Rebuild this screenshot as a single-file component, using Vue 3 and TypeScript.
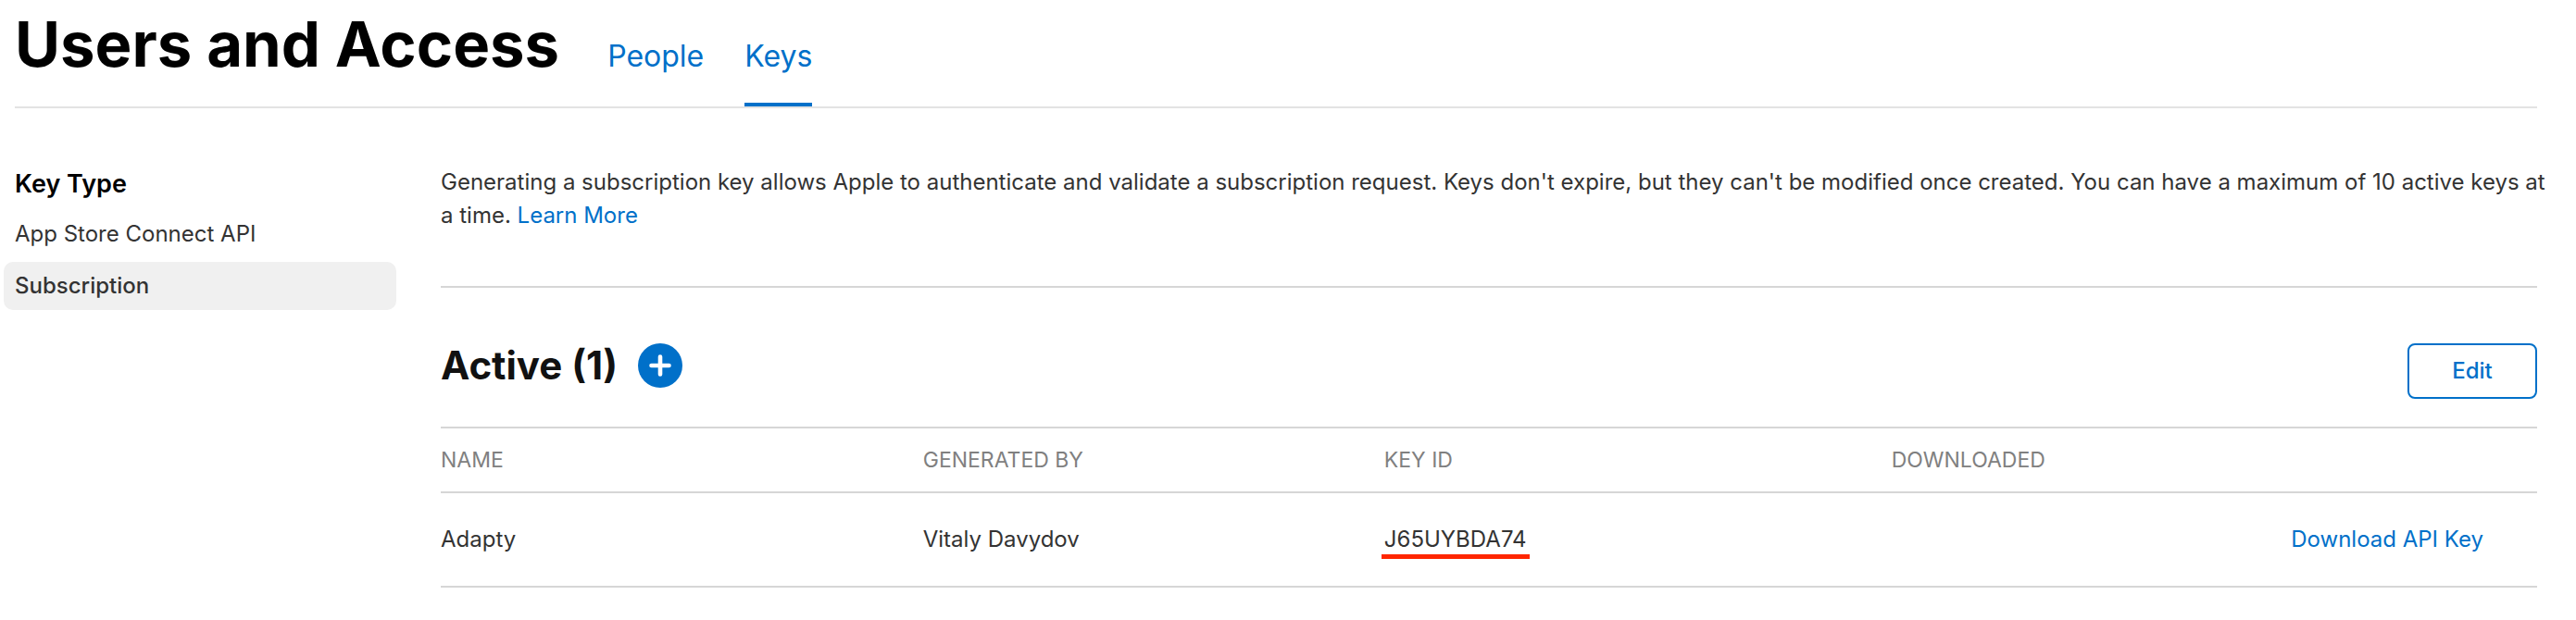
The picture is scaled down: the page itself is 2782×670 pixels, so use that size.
<script setup lang="ts">
import { ref } from 'vue'

interface ApiKey {
  name: string
  generatedBy: string
  keyId: string
  downloaded: string
}

const tabs = ['People', 'Keys']
const activeTab = ref('Keys')

const keyTypes = ['App Store Connect API', 'Subscription']
const activeType = ref('Subscription')

const keys = ref<ApiKey[]>([
  { name: 'Adapty', generatedBy: 'Vitaly Davydov', keyId: 'J65UYBDA74', downloaded: '' },
])
</script>

<template>
  <div class="page">
    <header class="header">
      <h1 class="title">Users and Access</h1>
      <nav class="tabs" aria-label="Sections">
        <a
          v-for="tab in tabs"
          :key="tab"
          href="#"
          class="tab"
          :class="{ current: tab === activeTab }"
          @click.prevent="activeTab = tab"
        >{{ tab }}</a>
      </nav>
    </header>

    <div class="body">
      <aside class="sidebar">
        <h2 class="side-title">Key Type</h2>
        <nav class="side-nav" aria-label="Key Type">
          <a
            v-for="type in keyTypes"
            :key="type"
            href="#"
            class="side-link"
            :class="{ current: type === activeType }"
            @click.prevent="activeType = type"
          >{{ type }}</a>
        </nav>
      </aside>

      <main class="main">
        <div class="intro">
          <p>
            Generating a subscription key allows Apple to authenticate and validate a subscription
            request. Keys don't expire, but they can't be modified once created. You can have a
            maximum of 10 active keys at a time. <a href="#" class="link">Learn More</a>
          </p>
        </div>

        <section>
          <div class="toolbar">
            <h2 class="count">Active ({{ keys.length }})</h2>
            <button type="button" class="add" aria-label="Generate key">
              <svg viewBox="0 0 48 48" width="48" height="48" aria-hidden="true">
                <circle cx="24" cy="24" r="24" fill="#0070c9" />
                <path d="M24 14.5v19M14.5 24h19" stroke="#fff" stroke-width="4.6" stroke-linecap="round" />
              </svg>
            </button>
            <button type="button" class="edit">Edit</button>
          </div>

          <table class="keys">
            <colgroup>
              <col class="c-name" />
              <col class="c-by" />
              <col class="c-id" />
              <col class="c-down" />
              <col />
            </colgroup>
            <thead>
              <tr>
                <th scope="col">NAME</th>
                <th scope="col">GENERATED BY</th>
                <th scope="col">KEY ID</th>
                <th scope="col">DOWNLOADED</th>
                <td></td>
              </tr>
            </thead>
            <tbody>
              <tr v-for="key in keys" :key="key.keyId">
                <td>{{ key.name }}</td>
                <td>{{ key.generatedBy }}</td>
                <td><span class="key-id">{{ key.keyId }}</span></td>
                <td>{{ key.downloaded }}</td>
                <td class="action"><a href="#" class="link">Download API Key</a></td>
              </tr>
            </tbody>
          </table>
        </section>
      </main>
    </div>
  </div>
</template>

<style>
body {
  margin: 0;
  background: #fff;
}
</style>

<style scoped>
.page {
  padding: 0 42px 36px 16px;
  font-family: Inter, "Liberation Sans", sans-serif;
  font-size: 24px;
  line-height: 36px;
  color: #333;
}

h1,
h2,
p {
  margin: 0;
}

a {
  text-decoration: none;
}

.link {
  color: #0070c9;
}

.header {
  display: flex;
  align-items: baseline;
  gap: 52px;
  border-bottom: 2px solid #e3e3e3;
}

.title {
  font-size: 67px;
  line-height: 96px;
  font-weight: 700;
  color: #000;
}

.tabs {
  display: flex;
  gap: 44px;
}

.tab {
  padding-bottom: 28px;
  border-bottom: 4px solid transparent;
  font-size: 32px;
  line-height: 44px;
  color: #0070c9;
}

.tab.current {
  border-bottom-color: #0070c9;
}

.body {
  display: flex;
  gap: 48px;
}

.sidebar {
  flex: 0 0 424px;
  margin-left: -12px;
  padding-top: 64px;
}

.side-title {
  padding-left: 12px;
  font-size: 27px;
  line-height: 36px;
  font-weight: 600;
  color: #000;
}

.side-nav {
  display: flex;
  flex-direction: column;
  gap: 4px;
  padding-top: 10px;
}

.side-link {
  padding: 8px 12px;
  border-radius: 10px;
  color: #333;
}

.side-link.current {
  background: #f0f0f0;
  font-weight: 500;
}

.main {
  flex: 1;
  min-width: 0;
}

.intro {
  padding: 62px 0 58px;
  border-bottom: 2px solid #d6d6d6;
}

.intro p {
  margin-right: -16px;
}

.toolbar {
  display: flex;
  align-items: flex-start;
  gap: 22px;
  padding: 60px 0 30px;
}

.count {
  font-size: 42px;
  line-height: 48px;
  font-weight: 700;
  color: #111;
}

.add {
  display: block;
  width: 48px;
  height: 48px;
  padding: 0;
  border: 0;
  background: none;
}

.add svg {
  display: block;
}

.edit {
  width: 140px;
  height: 60px;
  margin-left: auto;
  border: 2px solid #0070c9;
  border-radius: 8px;
  background: #fff;
  font: inherit;
  font-weight: 500;
  color: #0070c9;
}

.keys {
  width: 100%;
  table-layout: fixed;
  border-collapse: separate;
  border-spacing: 0;
  border-top: 2px solid #d6d6d6;
}

.c-name {
  width: 23%;
}

.c-by {
  width: 22%;
}

.c-id {
  width: 24.2%;
}

.c-down {
  width: 13%;
}

.keys th,
.keys td {
  padding: 32px 0;
  border-bottom: 2px solid #d6d6d6;
  text-align: left;
}

.keys thead th,
.keys thead td {
  padding: 16px 0;
  font-size: 23px;
  font-weight: 400;
  color: #808080;
}

.keys .action {
  padding-right: 58px;
  text-align: right;
}

.key-id {
  margin: 0 -3px;
  padding: 0 3px 2px;
  border-bottom: 5px solid #ff2600;
}
</style>
